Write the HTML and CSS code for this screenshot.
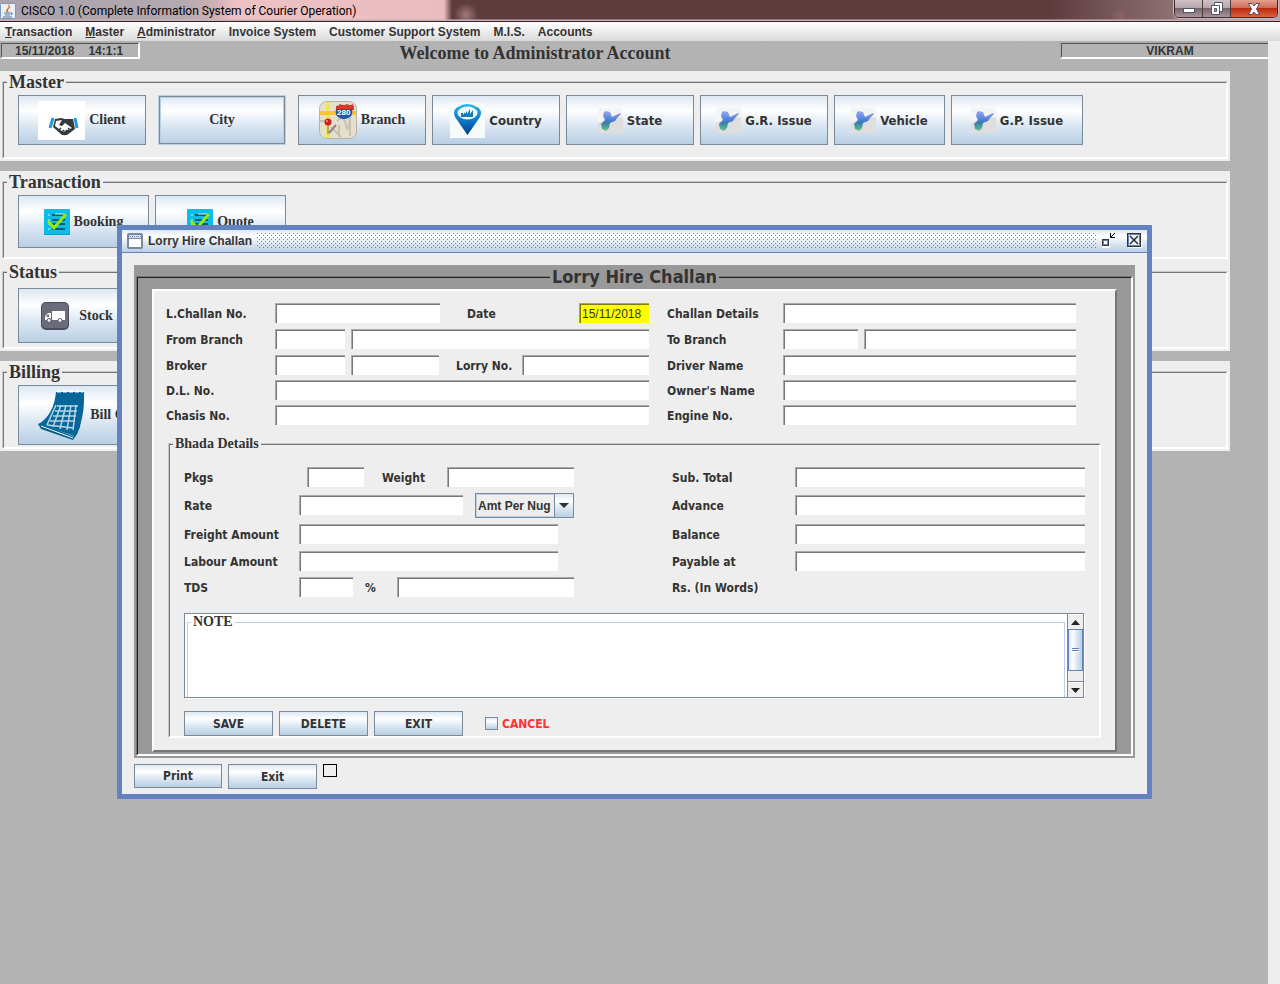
FILE: index.html
```html
<!DOCTYPE html>
<html lang="en">
<head>
    <meta charset="UTF-8">
    <meta name="viewport" content="width=device-width, initial-scale=1.0">
    <title>CISCO 1.0 (Complete Information System of Courier Operation)</title>
    <link rel="stylesheet" href="styles.css">
</head>
<body>
    <!-- shared icons -->
    <svg class="defs" width="0" height="0">
        <symbol id="map" viewBox="0 0 25 25">
            <rect width="25" height="25" fill="#eeebec"/>
            <path d="M0 0H25V9Q14 8 0 15Z" fill="#f5f4f4"/>
            <path d="M0 15Q14 8 25 10V25H0Z" fill="#e0dddf"/>
            <path d="M6 4L8 3L12 4L14 9L22 5L23 6L19 10L17 13L12 15L11 20L8 23L4 21L3 16L7 12L5 8Z" fill="url(#mapfill)"/>
        </symbol>
        <linearGradient id="mapfill" x1="0" y1="0" x2="0" y2="1">
            <stop offset="0" stop-color="#9da8f4"/>
            <stop offset=".45" stop-color="#4a80d8"/>
            <stop offset=".6" stop-color="#377fa9"/>
            <stop offset="1" stop-color="#62c98d"/>
        </linearGradient>
        <symbol id="checklist" viewBox="0 0 26 26">
            <rect width="26" height="27" rx="2" fill="#089fc4"/>
            <rect width="26" height="25" rx="2" fill="#0bbce6"/>
            <path d="M8 6H21M8 11H21M8 15H21M8 20H21" stroke="#075d78" stroke-width="2"/>
            <path d="M4 6H6M4 11H6M4 15H6M4 20H6M11 5H20" stroke="#d7f4fb" stroke-width="1"/>
            <path d="M4 12L10 19L22 5" fill="none" stroke="#9be60a" stroke-width="3"/>
        </symbol>
    </svg>

    <header class="titlebar">
        <svg class="java" width="16" height="16" viewBox="0 0 16 16">
            <rect x=".5" y=".5" width="15" height="15" rx="1" fill="#e9eff6" stroke="#7c98b8"/>
            <path d="M8 2Q11 4 8 6T8 9M10 4Q6 6 8 9" fill="none" stroke="#e8751a" stroke-width="1.3"/>
            <path d="M4 10H11M5 12H10M3 14H12M11 10Q14 10 11 12" fill="none" stroke="#4b769f"/>
        </svg>
        <span class="app-name">CISCO 1.0 (Complete Information System of Courier Operation)</span>
        <div class="win-controls">
            <button class="win-btn min" aria-label="Minimize">
                <svg width="12" height="12" viewBox="0 0 12 12"><rect x=".5" y="5.5" width="11" height="4" fill="#fff" stroke="#53566b"/></svg>
            </button>
            <button class="win-btn max" aria-label="Restore">
                <svg width="12" height="13" viewBox="0 0 12 13"><path d="M3.500.5H11.500V9.500H3.500Z" fill="#fff" stroke="#53566b"/><path d="M.500 3.500H8.500V12.500H.5Z" fill="#fff" stroke="#53566b"/><path d="M3.500 6.500H5.500V9.500H3.500Z" fill="#a59ca7" stroke="#53566b"/></svg>
            </button>
            <button class="win-btn close" aria-label="Close">
                <svg width="12" height="12" viewBox="0 0 12 12"><path d="M.5.5H4L6 3L8 .5H11.500L8.500 6L11.500 11.500H8L6 9L4 11.500H.5L3.500 6Z" fill="#fff" stroke="#5d4a55"/></svg>
            </button>
        </div>
    </header>

    <nav class="menubar">
        <a href="#"><u>T</u>ransaction</a>
        <a href="#"><u>M</u>aster</a>
        <a href="#"><u>A</u>dministrator</a>
        <a href="#">Invoice System</a>
        <a href="#">Customer Support System</a>
        <a href="#">M.I.S.</a>
        <a href="#">Accounts</a>
    </nav>

    <main class="desktop">
        <div class="status">
            <div class="clock"><span>15/11/2018</span><span>14:1:1</span></div>
            <h1>Welcome to Administrator Account</h1>
            <div class="user">VIKRAM</div>
        </div>

        <section class="panel">
            <fieldset>
                <legend>Master</legend>
                <div class="buttons">
                    <button class="tool serif client">
                        <svg width="47" height="39" viewBox="0 0 47 39">
                            <rect width="47" height="39" fill="#fff"/>
                            <path d="M15 17L12 27M37 17L39 27" stroke="#2299db" stroke-width="3"/>
                            <path d="M17 18L15 26L24 34H29L37 28L35 18H27L23 17Z" fill="#333b40"/>
                            <path d="M18 20L17 25L25 31L34 27L27 22L24 25L21 24L24 19Z" fill="#fff"/>
                            <path d="M20 30L23 27M23 32L26 29M26 34L29 30M30 32L28 29M33 30L30 27" stroke="#333b40" stroke-width="1.500"/>
                        </svg>
                        Client
                    </button>
                    <button class="tool serif city">City</button>
                    <button class="tool serif branch">
                        <svg width="38" height="38" viewBox="0 0 38 38">
                            <rect x=".5" y=".5" width="37" height="37" rx="7" fill="#e5dfcd" stroke="#b9b2a3"/>
                            <path d="M18 20Q25 13 27 24T31 17V35M12 26L22 36M1 20H9M20 24V36" fill="none" stroke="#c9c2af" stroke-width="2"/>
                            <path d="M7 1H11V37H7Z" fill="#eee653"/>
                            <path d="M1 10H37V14H1Z" fill="#f8c52a"/>
                            <path d="M17 5Q20 5 21 3Q25 5 28 3Q31 5 34 3Q34 5 35 5V9H17Z" fill="#d8382f"/>
                            <path d="M17 8H33Q35 17 25 18Q15 17 17 8Z" fill="#2255ac"/>
                            <text x="18" y="14" class="shield">280</text>
                            <path d="M10 32L17 24" stroke="#888" stroke-width="2"/>
                            <path d="M9 22V33" stroke="#777"/>
                            <circle cx="9" cy="21" r="3.500" fill="#d3201f"/>
                            <circle cx="8" cy="20" r="1" fill="#f49b92"/>
                        </svg>
                        Branch
                    </button>
                    <button class="tool country">
                        <svg width="35" height="35" viewBox="0 0 35 35">
                            <defs><linearGradient id="pin" x1="0" y1="0" x2="0" y2="1"><stop offset="0" stop-color="#29b7ea"/><stop offset=".6" stop-color="#0a70bd"/><stop offset="1" stop-color="#073c86"/></linearGradient></defs>
                            <rect width="35" height="35" fill="#f6fafb"/>
                            <path d="M17.500 32L5 14Q2 7 8 4Q17-2 27 4Q33 7 30 14Z" fill="url(#pin)"/>
                            <ellipse cx="17.500" cy="10" rx="10" ry="6.500" fill="#f3fafc"/>
                            <path d="M11 14V10H13V12L15 9V11L17 8V11L20 6V11L23 7V14Z" fill="#147bb8"/>
                        </svg>
                        Country
                    </button>
                    <button class="tool"><svg width="25" height="25"><use href="#map"/></svg>State</button>
                    <button class="tool"><svg width="25" height="25"><use href="#map"/></svg>G.R. Issue</button>
                    <button class="tool vehicle"><svg width="25" height="25"><use href="#map"/></svg>Vehicle</button>
                    <button class="tool gp"><svg width="25" height="25"><use href="#map"/></svg>G.P. Issue</button>
                </div>
            </fieldset>
        </section>

        <section class="panel joined">
            <fieldset>
                <legend>Transaction</legend>
                <div class="buttons">
                    <button class="tool serif booking"><svg width="26" height="26"><use href="#checklist"/></svg>Booking</button>
                    <button class="tool serif booking"><svg width="26" height="26"><use href="#checklist"/></svg>Quote</button>
                </div>
            </fieldset>
        </section>

        <section class="panel">
            <fieldset>
                <legend>Status</legend>
                <div class="buttons status-buttons">
                    <button class="tool serif stock">
                        <svg width="28" height="28" viewBox="0 0 28 28">
                            <rect width="28" height="28" rx="5" fill="#4c4d5c"/>
                            <rect x="1" y="1" width="26" height="25" rx="4" fill="#6a6b7b"/>
                            <path d="M11 9H24V18H11ZM5 13L7 11H10V18H4V15Z" fill="#fff"/>
                            <path d="M6 12.500H8V15H5.500Z" fill="#6a6b7b"/>
                            <circle cx="8" cy="18.500" r="2" fill="#fff" stroke="#555666"/>
                            <circle cx="19" cy="18.500" r="2" fill="#fff" stroke="#555666"/>
                        </svg>
                        Stock
                    </button>
                </div>
            </fieldset>
        </section>

        <section class="panel">
            <fieldset>
                <legend>Billing</legend>
                <div class="buttons">
                    <button class="tool serif bill">
                        <svg width="49" height="50" viewBox="0 0 49 50">
                            <path d="M1 34Q12 30 17 18L44 21Q46 38 36 50L4 39Z" fill="#045f8d"/>
                            <path d="M3 33L37 46M4 36L36 48" stroke="#fff" stroke-width="1"/>
                            <path d="M19 2H47Q48 32 37 46L2 34Q17 24 19 2Z" fill="#07669a"/>
                            <path d="M20 1.500H46" stroke="#fff" stroke-width="2" stroke-dasharray="4 2"/>
                            <path d="M20 16H41M18 21H40M16 26H39M13 31H38M10 35L37 38M19 15L10 35M24 15L16 37M29 15L23 39M34 15L30 40M39 15L36 40" stroke="#b7d5e6" stroke-width="1.500"/>
                        </svg>
                        Bill Create
                    </button>
                </div>
            </fieldset>
        </section>
    </main>

    <div class="window" role="dialog" aria-label="Lorry Hire Challan">
        <div class="window-bar">
            <svg width="16" height="16" viewBox="0 0 16 16">
                <rect x="1" y="1" width="14" height="14" rx="1" fill="#fff" stroke="#7a8a99" stroke-width="2"/>
                <path d="M2 2H14V5H2Z" fill="#d3dff0"/>
                <path d="M3 3.500H14" stroke="#6382bf" stroke-dasharray="1 1"/>
                <path d="M2 5.500H14" stroke="#7a8a99"/>
            </svg>
            <span>Lorry Hire Challan</span>
            <svg class="grip" height="16">
                <defs>
                    <pattern id="dots" width="4" height="4" patternUnits="userSpaceOnUse">
                        <path d="M0 0H1V1H0ZM2 2H3V3H2Z" fill="#6382bf"/>
                    </pattern>
                </defs>
                <rect width="100%" height="16" fill="url(#dots)"/>
            </svg>
            <button class="frame-btn" aria-label="Restore window">
                <svg width="16" height="16" viewBox="0 0 16 16">
                    <path d="M1 7H9V15H1Z" fill="#fff"/>
                    <path d="M1 6H8V13H1Z" fill="#6382bf"/>
                    <path d="M1.500 6.500H7.500V12.500H1.500Z" fill="none" stroke="#333"/>
                    <path d="M3 8H6V11H3Z" fill="#fff"/>
                    <path d="M9.500 0V4.500H14M10 4L14 0" fill="none" stroke="#000"/>
                </svg>
            </button>
            <button class="frame-btn" aria-label="Close window">
                <svg width="16" height="16" viewBox="0 0 16 16">
                    <path d="M1 1H15V15H1Z" fill="#fff"/>
                    <rect x=".5" y=".5" width="13" height="13" fill="#e9f0f8" stroke="#333"/>
                    <path d="M1.500 13V1.500H13M12.500 2V12.500H2" fill="none" stroke="#6382bf"/>
                    <path d="M3 3L11 11M11 3L3 11" stroke="#222" stroke-width="1.300"/>
                </svg>
            </button>
        </div>

        <form class="window-body">
            <div class="backdrop">
                <fieldset class="outer">
                    <legend>Lorry Hire Challan</legend>
                    <div class="sheet">
                        <div class="challan">
                            <div class="col">
                                <div class="row">
                                    <label for="challanNo">L.Challan No.</label>
                                    <input type="text" id="challanNo" class="w-challan">
                                    <label for="date" class="date-label">Date</label>
                                    <input type="text" id="date" value="15/11/2018">
                                </div>
                                <div class="row">
                                    <label for="fromCode">From Branch</label>
                                    <input type="text" id="fromCode" class="w-code">
                                    <input type="text" class="grow" aria-label="From branch name">
                                </div>
                                <div class="row">
                                    <label for="broker">Broker</label>
                                    <input type="text" id="broker" class="w-code">
                                    <input type="text" class="w-broker" aria-label="Broker name">
                                    <label for="lorryNo" class="lorry-label">Lorry No.</label>
                                    <input type="text" id="lorryNo" class="grow">
                                </div>
                                <div class="row">
                                    <label for="dlNo">D.L. No.</label>
                                    <input type="text" id="dlNo" class="grow">
                                </div>
                                <div class="row">
                                    <label for="chasisNo">Chasis No.</label>
                                    <input type="text" id="chasisNo" class="grow">
                                </div>
                            </div>
                            <div class="col right">
                                <div class="row">
                                    <label for="details">Challan Details</label>
                                    <input type="text" id="details" class="grow">
                                </div>
                                <div class="row">
                                    <label for="toCode">To Branch</label>
                                    <input type="text" id="toCode" class="w-to">
                                    <input type="text" class="grow" aria-label="To branch name">
                                </div>
                                <div class="row">
                                    <label for="driver">Driver Name</label>
                                    <input type="text" id="driver" class="grow">
                                </div>
                                <div class="row">
                                    <label for="owner">Owner's Name</label>
                                    <input type="text" id="owner" class="grow">
                                </div>
                                <div class="row">
                                    <label for="engineNo">Engine No.</label>
                                    <input type="text" id="engineNo" class="grow">
                                </div>
                            </div>
                        </div>

                        <fieldset class="bhada">
                            <legend>Bhada Details</legend>
                            <div class="amounts">
                                <div class="col">
                                    <div class="row">
                                        <label for="pkgs" class="wide">Pkgs</label>
                                        <input type="text" id="pkgs" class="w-pkgs">
                                        <label for="weight" class="weight-label">Weight</label>
                                        <input type="text" id="weight" class="grow">
                                    </div>
                                    <div class="row">
                                        <label for="rate">Rate</label>
                                        <input type="text" id="rate" class="w-rate">
                                        <div class="combo">
                                            <select aria-label="Rate type"><option>Amt Per Nug</option></select>
                                            <span class="arrow"></span>
                                        </div>
                                    </div>
                                    <div class="row">
                                        <label for="freight">Freight Amount</label>
                                        <input type="text" id="freight" class="w-amount">
                                    </div>
                                    <div class="row">
                                        <label for="labour">Labour Amount</label>
                                        <input type="text" id="labour" class="w-amount">
                                    </div>
                                    <div class="row">
                                        <label for="tds">TDS</label>
                                        <input type="text" id="tds" class="w-tds">
                                        <label for="tdsAmount" class="percent">%</label>
                                        <input type="text" id="tdsAmount" class="grow">
                                    </div>
                                </div>
                                <div class="col right">
                                    <div class="row">
                                        <label for="subTotal">Sub. Total</label>
                                        <input type="text" id="subTotal" class="grow">
                                    </div>
                                    <div class="row">
                                        <label for="advance">Advance</label>
                                        <input type="text" id="advance" class="grow">
                                    </div>
                                    <div class="row">
                                        <label for="balance">Balance</label>
                                        <input type="text" id="balance" class="grow">
                                    </div>
                                    <div class="row">
                                        <label for="payable">Payable at</label>
                                        <input type="text" id="payable" class="grow">
                                    </div>
                                    <div class="row">
                                        <span class="words">Rs. (In Words)</span>
                                    </div>
                                </div>
                            </div>

                            <div class="note">
                                <fieldset>
                                    <legend>NOTE</legend>
                                    <textarea aria-label="Note"></textarea>
                                </fieldset>
                                <div class="scrollbar">
                                    <button type="button" aria-label="Scroll up"><svg width="9" height="5" viewBox="0 0 9 5"><path d="M0 5L4.500 0L9 5Z" fill="#222"/></svg></button>
                                    <div class="track"><div class="thumb"></div></div>
                                    <button type="button" aria-label="Scroll down"><svg width="9" height="5" viewBox="0 0 9 5"><path d="M0 0L4.500 5L9 0Z" fill="#222"/></svg></button>
                                </div>
                            </div>

                            <div class="actions">
                                <button type="button" class="btn">SAVE</button>
                                <button type="button" class="btn">DELETE</button>
                                <button type="button" class="btn">EXIT</button>
                                <label class="cancel"><input type="checkbox">CANCEL</label>
                            </div>
                        </fieldset>
                    </div>
                </fieldset>
            </div>

            <div class="footer">
                <button type="button" class="btn print">Print</button>
                <button type="button" class="btn">Exit</button>
                <input type="checkbox" class="plain" aria-label="Print preview">
            </div>
        </form>
    </div>
</body>
</html>
```
FILE: styles.css
```css
* {
    box-sizing: border-box;
}
body {
    margin: 0;
    min-height: 100vh;
    display: flex;
    flex-direction: column;
    font-family: "DejaVu Sans Condensed", "DejaVu Sans", sans-serif;
    font-size: 12px;
    font-weight: bold;
    color: #333;
    background-color: #b3b3b3;
}
fieldset {
    margin: 0;
    padding: 0;
    min-width: 0;
    border: 2px solid #fff;
    border-top: 2px ridge #c8c8c8;
    border-left: 2px ridge #c8c8c8;
}
legend {
    padding: 0 2px;
    font-family: "Liberation Serif", serif;
}
button {
    font: inherit;
    color: inherit;
    padding: 0;
}
svg {
    flex: none;
}
.defs {
    position: absolute;
}

/* main window title bar */
.titlebar {
    display: flex;
    align-items: center;
    height: 22px;
    border-bottom: 1px solid #33202a;
    background:
        linear-gradient(to bottom, transparent 19px, #cbb0b2 20px),
        radial-gradient(circle at 466px 15px, #a47a7e 0, transparent 12px),
        radial-gradient(circle at 1120px 16px, #8b6266 0, transparent 9px),
        linear-gradient(to right, transparent 82%, #8a6d70 91%, #b5a2a5 100%),
        linear-gradient(to right, #a9a2ab 0, #b3a9b0 180px, #cfb0b6 215px, #edc2c5 235px, #e9bcc0 444px, #5d3c3e 452px);
}
.java {
    margin: 0 5px 0 0;
}
.app-name {
    font: 12px "Roboto", sans-serif;
    color: #000;
}
.win-controls {
    display: flex;
    align-self: flex-start;
    margin-left: auto;
    margin-right: 2px;
    height: 18px;
    border: 1px solid #3e2c33;
    border-top: 0;
    border-radius: 0 0 5px 5px;
    box-shadow: 0 0 0 1px #c9b5b8;
    overflow: hidden;
}
.win-btn {
    display: flex;
    align-items: center;
    justify-content: center;
    width: 28px;
    border: 0;
    border-right: 1px solid #4d3b42;
    background: linear-gradient(#d0c2c6 0, #b8a6ab 45%, #7b656c 50%, #a8949a 100%);
}
.win-btn.close {
    width: 46px;
    border-right: 0;
    background: linear-gradient(#e3a093 0, #cf6c57 45%, #b82c12 50%, #e0603a 100%);
}

.menubar {
    display: flex;
    gap: 13px;
    height: 19px;
    padding-left: 5px;
    background: linear-gradient(#fff, #dadada);
    font: bold 12px/20px "Liberation Sans", sans-serif;
}
.menubar a {
    color: #333;
    text-decoration: none;
}

.desktop {
    flex: 1;
    border-right: 12px solid #eee;
}
.status {
    display: grid;
    grid-template-columns: 140px 1fr 208px;
    align-items: start;
    height: 30px;
    padding-top: 1px;
    font: bold 12px/14px "Liberation Sans", sans-serif;
}
.status h1 {
    margin: 0;
    padding-right: 130px;
    font: bold 18px/22px "Liberation Serif", serif;
    text-align: center;
}
.clock, .user {
    height: 17px;
    border: 2px solid #fff;
    border-top: 2px ridge #aaa;
    border-left: 2px ridge #aaa;
}
.clock {
    display: flex;
    gap: 14px;
    padding-left: 13px;
}
.user {
    padding-left: 10px;
    border-right: 0;
    text-align: center;
}

.panel {
    display: flex;
    min-height: 90px;
    margin: 0 38px 10px 0;
    padding: 1px 2px 2px;
    background-color: #eee;
}
.panel.joined {
    margin-bottom: 0;
}
.panel fieldset {
    flex: 1;
    padding-left: 3px;
}
.panel legend {
    font-size: 18px;
    line-height: 20px;
}
.buttons {
    display: flex;
    gap: 6px;
    padding: 3px 0 0 11px;
}
.status-buttons {
    padding-top: 6px;
}
.tool {
    display: flex;
    align-items: center;
    justify-content: center;
    gap: 4px;
    width: 128px;
    height: 50px;
    border: 1px solid #7a8a99;
    background: linear-gradient(#dde8f3 0, #fff 30%, #dde8f3 60%, #b8cfe5 100%);
    font-size: 13px;
}
.serif {
    font-family: "Liberation Serif", serif;
    font-size: 14px;
}
.city {
    margin: 0 6px;
    box-shadow: inset 0 0 0 1px #7a8a99, inset 0 0 0 2px #b8cfe5;
    border-color: #b8cfe5;
}
.shield {
    font: bold 8px "Liberation Sans", sans-serif;
    fill: #fff;
}
.vehicle {
    width: 111px;
}
.gp {
    width: 132px;
}
.booking {
    width: 131px;
    height: 53px;
}
.stock {
    width: 118px;
    height: 55px;
    gap: 10px;
}
.bill {
    width: 156px;
    height: 60px;
}

/* internal frame */
.window {
    position: absolute;
    top: 225px;
    left: 117px;
    width: 1035px;
    border: 5px solid #6382bf;
    border-radius: 1px;
    background-color: #eee;
}
.window-bar {
    display: flex;
    align-items: center;
    gap: 5px;
    height: 23px;
    padding: 0 4px 0 5px;
    border-bottom: 1px solid #6382bf;
    background: linear-gradient(#dde8f3 0, #fff 30%, #dde8f3 60%, #b8cfe5 100%);
    font: bold 12px "Liberation Sans", sans-serif;
}
.grip {
    flex: 1;
    min-width: 0;
}
.frame-btn {
    width: 16px;
    height: 16px;
    margin-left: 5px;
    border: 0;
    background: none;
}
.frame-btn:first-of-type {
    margin: 0;
}
.frame-btn svg {
    display: block;
}
.window-body {
    padding: 12px 12px 5px;
}

.backdrop {
    padding: 0 2px 2px;
    background-color: #999;
}
.outer {
    border-top: 2px ridge #777;
    border-left: 2px ridge #777;
    padding: 0 14px 2px;
}
.outer > legend {
    margin: 0 auto;
    font: bold 18px/24px "DejaVu Sans Condensed", sans-serif;
}
.sheet {
    padding: 12px 14px 12px 12px;
    border: 2px solid #fff;
    border-right-color: #777;
    border-bottom-color: #777;
    background-color: #eee;
}

.challan, .amounts {
    display: flex;
}
.challan {
    padding-right: 25px;
    gap: 18px;
}
.col {
    display: grid;
    flex: none;
    grid-template-columns: minmax(0, 1fr);
    grid-template-rows: 26px 26px 25px 25px 20px;
    width: 483px;
}
.col.right {
    flex: 1;
}
.row {
    display: flex;
    align-items: flex-start;
    line-height: 22px;
}
.row > label:first-child {
    width: 109px;
}
.row input {
    height: 20px;
    min-width: 0;
    margin: 0;
    padding: 0 1px 0 2px;
    border: 0;
    border-top: 1px solid #aaa;
    border-left: 1px solid #aaa;
    box-shadow: inset 1px 1px #777;
    background-color: #fff;
    font: 12px "Liberation Sans", sans-serif;
    color: #333;
}
.row input + input {
    margin-left: 6px;
}
.right .row > label:first-child {
    width: 116px;
}
.row .grow {
    flex: 1;
}
.w-challan { width: 165px; }
.w-code { width: 70px; }
.w-broker { width: 88px; }
.w-to { width: 75px; }
.w-pkgs { width: 57px; }
.w-rate { width: 164px; }
.w-amount { width: 259px; }
.w-tds { width: 54px; }
.date-label {
    margin-left: 27px;
}
.row #date {
    width: 70px;
    margin-left: auto;
    border-color: #b3b300;
    box-shadow: inset 1px 1px #7d7d00;
    background-color: #ff0;
}
.lorry-label {
    width: 66px;
    margin-left: 17px;
}

.bhada {
    margin: 9px 0 0 2px;
}
.bhada > legend {
    margin-left: 3px;
    font-size: 14px;
    line-height: 20px;
}
.amounts {
    padding: 13px 14px 0;
    gap: 98px;
}
.amounts .col {
    grid-template-rows: 28px 29px 27px 26px 20px;
    width: 390px;
}
.amounts .row > label:first-child {
    width: 115px;
}
.amounts .row > label.wide:first-child,
.amounts .right .row > label:first-child {
    width: 123px;
}
.weight-label {
    width: 65px;
    margin-left: 18px;
}
.percent {
    width: 32px;
    margin-left: 12px;
}
.combo {
    position: relative;
    flex: 1;
    min-width: 0;
    margin: -2px 0 0 12px;
}
.combo select {
    appearance: none;
    display: block;
    width: 100%;
    height: 25px;
    padding: 0 0 0 2px;
    border: 1px solid #7a8a99;
    border-radius: 0;
    box-shadow: inset 0 0 0 1px #b8cfe5;
    background-color: #eee;
    font: bold 12px "Liberation Sans", sans-serif;
    color: #333;
}
.arrow {
    position: absolute;
    top: 1px;
    right: 1px;
    bottom: 1px;
    width: 19px;
    border-left: 1px solid #7a8a99;
    background: linear-gradient(#dde8f3 0, #fff 30%, #dde8f3 60%, #b8cfe5 100%);
    pointer-events: none;
}
.arrow::after {
    content: "";
    position: absolute;
    top: 9px;
    left: 4px;
    border: 5px solid transparent;
    border-top-color: #333;
    border-bottom: 0;
}

.note {
    display: flex;
    height: 85px;
    margin: 16px 15px 0 14px;
    border: 1px solid #7a8a99;
    box-shadow: 1px 1px #fff;
    background-color: #fff;
    overflow: hidden;
}
.note fieldset {
    flex: 1;
    height: 96px;
    margin: 0 2px;
    border: 1px solid #b8cfe5;
}
.note legend {
    margin-left: 3px;
    font-size: 14px;
    line-height: 16px;
}
.note textarea {
    display: block;
    width: 100%;
    height: 70px;
    border: 0;
    resize: none;
}
.scrollbar {
    display: flex;
    flex-direction: column;
    width: 16px;
    border-left: 1px solid #7a8a99;
    background-color: #eee;
}
.scrollbar button {
    display: flex;
    align-items: center;
    justify-content: center;
    height: 15px;
    border: 0;
    border-top: 1px solid #fff;
    background-color: #eee;
}
.track {
    flex: 1;
    border-bottom: 1px solid #7a8a99;
}
.thumb {
    height: 42px;
    padding: 18px 3px;
    border: 1px solid #6382bf;
    background:
        repeating-linear-gradient(#6382bf 0 1px, #fff 1px 2px) content-box,
        linear-gradient(to right, #dde8f3 0, #fff 30%, #dde8f3 60%, #b8cfe5 100%);
}

.btn {
    width: 89px;
    height: 25px;
    border: 1px solid #7a8a99;
    background: linear-gradient(#dde8f3 0, #fff 30%, #dde8f3 60%, #b8cfe5 100%);
}
.btn.print {
    width: 88px;
    height: 24px;
}
.actions, .footer {
    display: flex;
    gap: 6px;
}
.actions {
    padding: 13px 14px 0;
}
.cancel {
    display: flex;
    align-items: center;
    gap: 4px;
    margin-left: 16px;
    color: #f33;
}
.cancel input {
    appearance: none;
    width: 13px;
    height: 13px;
    margin: 0;
    border: 1px solid #7a8a99;
    background: linear-gradient(#dde8f3 0, #fff 30%, #b8cfe5 100%);
}
.footer {
    padding-top: 6px;
}
.plain {
    appearance: none;
    width: 14px;
    height: 13px;
    margin: 0;
    border: 1px solid #000;
}
```
